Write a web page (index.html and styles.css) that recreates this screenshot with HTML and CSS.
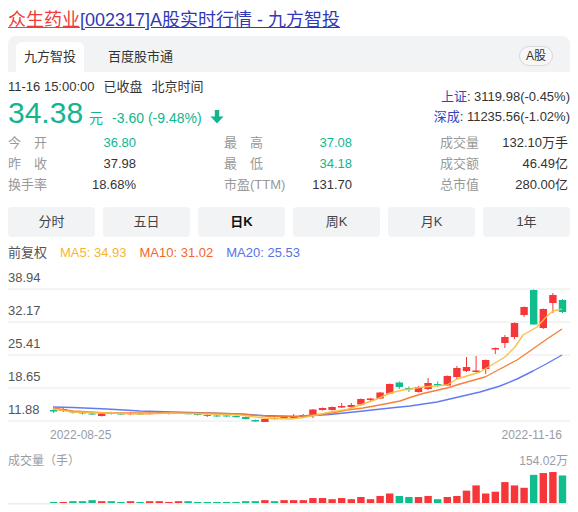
FILE: index.html
```html
<!DOCTYPE html>
<html lang="zh-CN">
<head>
<meta charset="utf-8">
<title>众生药业</title>
<link rel="stylesheet" href="styles.css">
</head>
<body>
<h1 class="title"><a class="t-name" href="#">众生药业</a><a class="t-rest" href="#">[002317]A股实时行情 - 九方智投</a></h1>

<div class="tabbar">
  <div class="tab active">九方智投</div>
  <div class="tab">百度股市通</div>
  <div class="pill">A股</div>
</div>

<div class="quote">
  <div class="q-left">
    <div class="time"><span>11-16 15:00:00</span><span class="gap">已收盘</span><span class="gap">北京时间</span></div>
    <div class="price-line"><span class="price">34.38</span><span class="unit">元</span><span class="chg">-3.60 (-9.48%)</span><svg class="arrow" width="14" height="14" viewBox="0 0 14 14"><path d="M4.8 0h4.4v6.6h4.3L7 13.5 0.5 6.6h4.3z" fill="#12b58c"/></svg></div>
  </div>
  <div class="q-right">
    <div><span class="idx">上证</span>: 3119.98(-0.45%)</div>
    <div><span class="idx">深成</span>: 11235.56(-1.02%)</div>
  </div>
</div>

<div class="stats">
  <div class="cell"><span class="lb">今　开</span><span class="v green">36.80</span></div>
  <div class="cell"><span class="lb">最　高</span><span class="v green">37.08</span></div>
  <div class="cell"><span class="lb">成交量</span><span class="v">132.10万手</span></div>
  <div class="cell"><span class="lb">昨　收</span><span class="v">37.98</span></div>
  <div class="cell"><span class="lb">最　低</span><span class="v green">34.18</span></div>
  <div class="cell"><span class="lb">成交额</span><span class="v">46.49亿</span></div>
  <div class="cell"><span class="lb">换手率</span><span class="v">18.68%</span></div>
  <div class="cell"><span class="lb">市盈(TTM)</span><span class="v">131.70</span></div>
  <div class="cell"><span class="lb">总市值</span><span class="v">280.00亿</span></div>
</div>

<div class="periods">
  <div class="period">分时</div>
  <div class="period">五日</div>
  <div class="period active">日K</div>
  <div class="period">周K</div>
  <div class="period">月K</div>
  <div class="period">1年</div>
</div>

<div class="ma-row">
  <span class="fq">前复权</span>
  <span class="ma5">MA5: 34.93</span>
  <span class="ma10">MA10: 31.02</span>
  <span class="ma20">MA20: 25.53</span>
</div>

<div class="chart">
  <div class="grow first"><span class="ylab">38.94</span></div>
  <div class="grow"><span class="ylab">32.17</span></div>
  <div class="grow"><span class="ylab">25.41</span></div>
  <div class="grow"><span class="ylab">18.65</span></div>
  <div class="grow"><span class="ylab">11.88</span></div>
  <svg id="kline" class="kline" width="562" height="160" viewBox="8 262 562 160"></svg>
</div>

<div class="xaxis"><span>2022-08-25</span><span>2022-11-16</span></div>

<div class="vol-head"><span>成交量（手）</span><span>154.02万</span></div>
<svg id="vol" class="vol" width="562" height="36" viewBox="8 469 562 36"></svg>

<script src="chart.js"></script>
</body>
</html>
```

FILE: styles.css
```css
html, body {
  overflow: hidden;
}
body {
  margin: 8px;
  font-family: "Liberation Sans", "Noto Sans CJK SC", sans-serif;
  font-size: 13px;
  color: #333;
  background: #fff;
}
.title {
  margin: 0 0 4px;
  height: 24px;
  font-size: 18px;
  line-height: 24px;
  font-weight: normal;
  white-space: nowrap;
}
.title a { text-decoration: underline; }
.t-name { color: #ee3a3a; }
.t-rest { color: #3238b6; }

.tabbar {
  display: flex;
  align-items: flex-end;
  gap: 16px;
  height: 36px;
  padding: 0 17px 0 8px;
  background: #f2f3f5;
  border-radius: 8px 8px 0 0;
}
.tab {
  height: 30px;
  line-height: 30px;
  padding: 0 8px;
  font-size: 13px;
  color: #333;
  border-radius: 6px 6px 0 0;
}
.tab.active { background: #fff; }
.pill {
  margin-left: auto;
  margin-bottom: 6px;
  height: 18px;
  line-height: 18px;
  padding: 0 6px;
  font-size: 12px;
  color: #333;
  background: #f7f7f8;
  border: 1px solid #d8d8dc;
  border-radius: 10px;
}

.quote {
  display: flex;
  justify-content: space-between;
  margin-top: 6px;
}
.time {
  height: 18px;
  line-height: 18px;
  color: #333;
}
.time .gap { margin-left: 9px; }
.price-line {
  height: 34px;
  line-height: 34px;
  white-space: nowrap;
}
.price {
  font-size: 30px;
  color: #12b58c;
}
.unit {
  margin-left: 6px;
  font-size: 14px;
  color: #12b58c;
}
.chg {
  margin-left: 9px;
  font-size: 14px;
  color: #12b58c;
}
.arrow {
  margin-left: 8px;
  vertical-align: -1px;
}
.q-right {
  padding-top: 9px;
  line-height: 20px;
  text-align: right;
  color: #333;
}
.idx { color: #3543c0; }

.stats {
  display: grid;
  grid-template-columns: repeat(3, 128px);
  column-gap: 88px;
  margin-top: 2px;
  line-height: 21px;
}
.cell {
  display: flex;
  justify-content: space-between;
  white-space: nowrap;
}
.lb { color: #999; }
.v { color: #333; }
.green { color: #12b58c; }

.periods {
  display: flex;
  gap: 8px;
  margin-top: 12px;
}
.period {
  flex: 1;
  height: 30px;
  line-height: 30px;
  text-align: center;
  background: #f2f3f5;
  border-radius: 4px;
  color: #444;
}
.period.active {
  font-weight: bold;
  color: #111;
}

.ma-row {
  display: flex;
  gap: 13px;
  margin-top: 7px;
  height: 18px;
  line-height: 18px;
}
.fq { color: #555; }
.ma5 { color: #f7b52e; }
.ma10 { color: #f4652d; }
.ma20 { color: #5872e6; }

.chart {
  position: relative;
}
.grow {
  display: flex;
  align-items: flex-end;
  height: 31px;
  border-bottom: 2px solid #f4f4f5;
}
.grow.first { height: 26px; }
.ylab {
  padding-bottom: 2px;
  line-height: 16px;
  color: #555;
}
.kline {
  position: absolute;
  left: 0;
  top: 0;
  overflow: visible;
}

.xaxis {
  display: flex;
  justify-content: space-between;
  margin-top: 5px;
  padding: 0 8px 0 42px;
  line-height: 16px;
  font-size: 12px;
  color: #9b9ba6;
}
.vol-head {
  display: flex;
  justify-content: space-between;
  margin-top: 10px;
  padding-right: 2px;
  line-height: 16px;
  font-size: 12px;
  color: #9b9ba6;
}
.vol {
  display: block;
}
```

FILE: chart.js
```js
(function () {
  var NS = 'http://www.w3.org/2000/svg';
  var RED = '#f7363a', GREEN = '#10bd8d';
  function el(parent, tag, attrs) {
    var e = document.createElementNS(NS, tag);
    for (var k in attrs) e.setAttribute(k, attrs[k]);
    parent.appendChild(e);
    return e;
  }
  // [color, bodyTop, bodyBottom, wickTop, wickBottom] in page pixels
  var C = [
    ['g',410,411.5,409,413],['r',409,411,408,412],['g',411.5,412.5,411,413.5],['g',412.5,413.5,412,414.5],
    ['g',413.5,414.5,413,415],['r',413.5,416,413,416.5],['g',413,414,412.5,414.5],['g',413.5,414.5,413,415],
    ['r',413,414.2,412,415],['g',413.5,414.5,413,415],['r',413,414.2,412.5,414.5],['r',412.5,413.7,412,414],
    ['r',413,414,412.5,414.5],['r',412.5,413.7,412,414],['g',413,414.2,412.5,414.5],['g',414,415,413.5,415.5],
    ['g',415,416,413.5,417],['g',415.5,416.5,415,417],['g',415.5,416.5,415,417],['g',416,417.2,415.5,417.5],
    ['g',417,419,416.5,419.5],['g',420,421.5,419.5,421.5],['r',419,422,418.5,422],['g',418,419.2,417.5,419.5],
    ['r',417,418.2,416.5,418.5],['r',416,418,414,418.5],['r',415,417,414,417.5],['r',409.5,415.5,409,418],
    ['r',408,410,407.5,410.5],['r',407,410,406.5,410.5],['r',406,407.5,403,408],['r',405,407,403,407.5],
    ['r',399,404.5,398.5,406],['r',398.5,400,398,401],['r',392.5,398.5,392,399],['r',384,393.5,383.5,394],
    ['g',382.5,387,381.5,389],['g',388,389.5,386.5,392],['r',387,392,386,392.5],['r',383,389,378,390],
    ['g',384,385.2,381.5,387],['r',376,385.5,375.5,386],['r',368,377,366,379],['r',367,371,357,372],
    ['r',370.5,372,356,372.5],['r',360,369,359.5,374],['r',348,349.5,347.5,354],['r',337,343,335,348],
    ['r',323,337,322.5,339],['r',307,315,306.5,317],['g',290,324.5,289.5,324.5],['r',309,328,308.5,329],
    ['r',295,303,293,313],['g',300,312,299,313]
  ];
  var V = [1.1,1.1,1.9,1.9,3,1.9,1.9,1.1,1.9,1.1,1.9,1.9,1.1,1.9,1.9,1.1,1.1,1.1,1.1,1.1,
           1.9,1.9,3,1.9,3,3,3,5.2,5.2,4,5.2,4,6.3,4,7.4,10,7.4,6.3,6.3,7.4,
           4,6.3,7.4,13,18.5,10,11.9,22,18.5,16,29.6,31.5,32.6,29];
  var MA5 = '53,409 73,412 107,413 140,414 173,413 207,414 240,415 263,418 290,419 300,418 317,415 330,412 347,409.5 360,405 377,399 390,393 403,390 423,387 447,385 457,379 480,372 490,366 505,357 515,347 523,335 537,327 547,316 553,311 562,309';
  var MA10 = '53,408 73,411 107,413 140,413 173,413 207,413 240,414 270,416.5 297,416.5 313,415 330,413.5 347,410 363,408 377,405.5 390,403 400,401 410,397.5 423,393.5 447,388 460,384 485,377 500,369 517,360 530,351 547,339 562,329';
  var MA20 = '53,407 73,407.5 107,409 140,411 173,412 207,413 240,414 263,415.5 297,416.5 330,414.5 363,411 395,407.5 410,406 437,402 467,395 480,392 500,386 517,379 533,371 547,363.5 562,355';

  var k = document.getElementById('kline');
  var v = document.getElementById('vol');
  var W = 7.4;
  C.forEach(function (c, i) {
    var x = 50 + 9.6 * i;
    var col = c[0] === 'r' ? RED : GREEN;
    var cx = x + W / 2;
    el(k, 'line', {x1: cx, x2: cx, y1: c[3], y2: c[4], stroke: col, 'stroke-width': 1});
    el(k, 'rect', {x: x, y: c[1], width: W, height: Math.max(1, c[2] - c[1]), fill: col});
    var h = Math.max(1, V[i] * 0.95);
    el(v, 'rect', {x: x, y: 503 - h, width: W, height: h, fill: col});
  });
  [[MA20, '#5b74ee'], [MA10, '#f57a30'], [MA5, '#fbbd3c']].forEach(function (m) {
    el(k, 'polyline', {points: m[0], fill: 'none', stroke: m[1], 'stroke-width': 1.4, 'stroke-linejoin': 'round', opacity: 0.95});
  });
  el(v, 'rect', {x: 8, y: 503, width: 560, height: 1.5, fill: '#ececee'});
})();
```
